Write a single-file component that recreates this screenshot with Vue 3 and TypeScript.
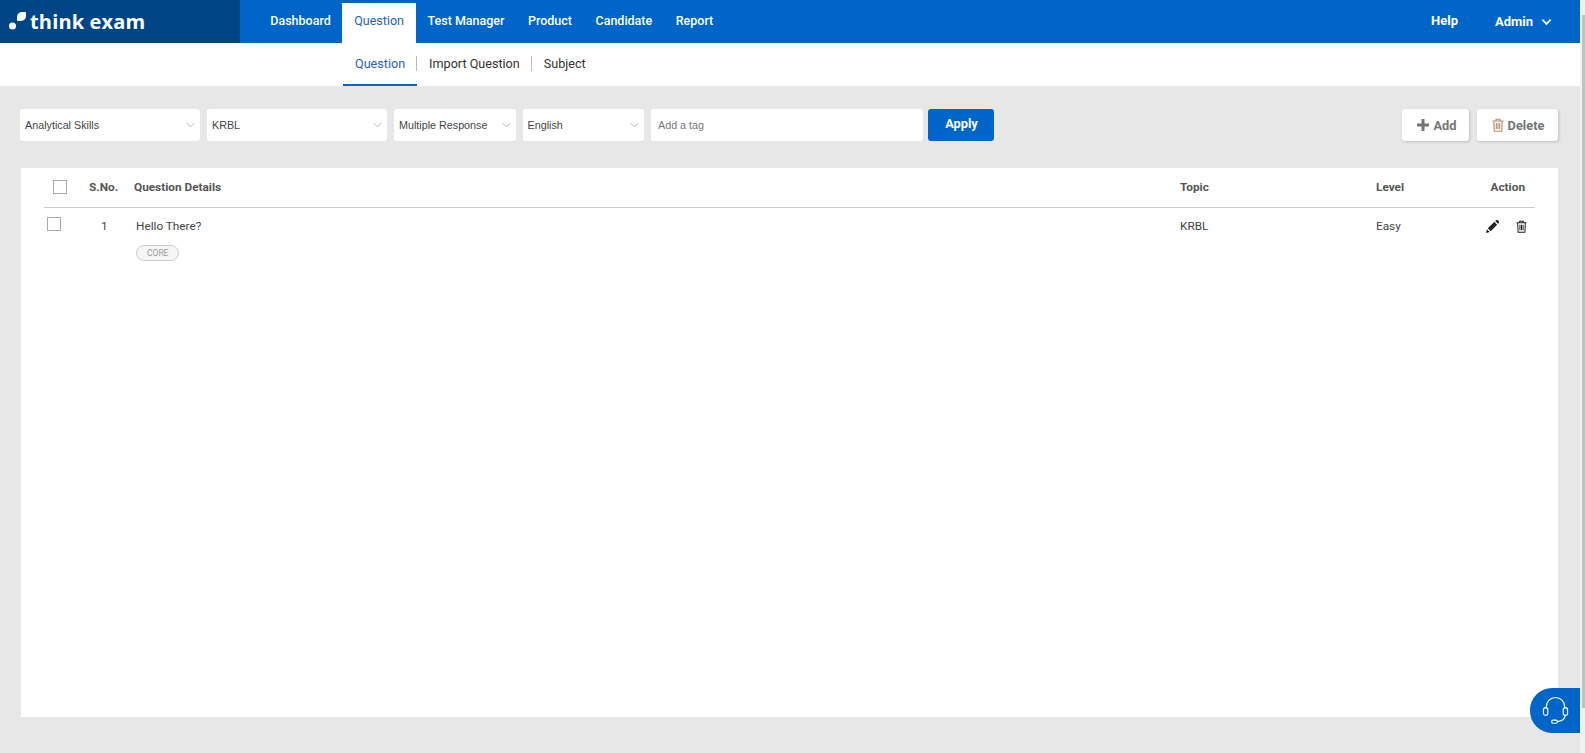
<script setup lang="ts">
const navItems = ['Dashboard', 'Question', 'Test Manager', 'Product', 'Candidate', 'Report']
const subItems = ['Question', 'Import Question', 'Subject']
const filters = [
  { label: 'Analytical Skills', cls: 'w-a' },
  { label: 'KRBL', cls: 'w-a' },
  { label: 'Multiple Response', cls: 'w-b' },
  { label: 'English', cls: 'w-b' },
]
</script>

<template>
  <div class="page">
    <div class="main">
      <header class="topbar">
        <div class="logo">
          <svg class="logo-mark" viewBox="0 0 18 18" width="18" height="18">
            <circle cx="3.5" cy="14" r="3.5" fill="#fff" />
            <path d="M8 5a5 5 0 0 1 5-5h3a1 1 0 0 1 1 1v3a5 5 0 0 1-5 5H9a1 1 0 0 1-1-1z" fill="#fff" />
          </svg>
          <span class="logo-text">think exam</span>
        </div>
        <nav class="nav">
          <a v-for="n in navItems" :key="n" class="nav-item" :class="{ active: n === 'Question' }">{{ n }}</a>
        </nav>
        <div class="nav-right">
          <a class="help">Help</a>
          <a class="admin">Admin
            <svg viewBox="0 0 12 8" width="11" height="8"><path d="M1.500 1.500 6 6l4.500-4.500" fill="none" stroke="#fff" stroke-width="2" /></svg>
          </a>
        </div>
      </header>

      <div class="subbar">
        <a v-for="(s, i) in subItems" :key="s" class="sub-item" :class="{ active: i === 0, last: i === subItems.length - 1 }">
          <span class="sub-label">{{ s }}</span>
        </a>
      </div>

      <section class="filters">
        <div v-for="f in filters" :key="f.label" class="select" :class="f.cls">
          <span>{{ f.label }}</span>
          <svg viewBox="0 0 10 6" width="9" height="6"><path d="M.8.800 5 5 9.200.800" fill="none" stroke="#a8a8a8" stroke-width="1" /></svg>
        </div>
        <div class="tag-input">Add a tag</div>
        <button class="apply">Apply</button>
        <div class="spacer"></div>
        <button class="ghost add">
          <svg viewBox="0 0 12 12" width="12" height="12"><path d="M4.500 0h3v4.500H12v3H7.500V12h-3V7.500H0v-3h4.500z" fill="#757575" /></svg>
          Add
        </button>
        <button class="ghost del">
          <svg viewBox="0 0 12 14" width="12" height="14" fill="none" stroke="#b98a6a" stroke-width="1.100">
            <path d="M.5 3h11M4 3V1.200h4V3M1.800 3l.5 10.300h7.400L10.200 3M4.300 5v6M6 5v6M7.700 5v6" />
          </svg>
          Delete
        </button>
      </section>

      <section class="card">
        <div class="row head">
          <div class="c-check"><span class="box head-box"></span></div>
          <div class="c-sno">S.No.</div>
          <div class="c-detail">Question Details</div>
          <div class="c-topic">Topic</div>
          <div class="c-level">Level</div>
          <div class="c-action">Action</div>
        </div>
        <div class="row body">
          <div class="c-check"><span class="box row-box"></span></div>
          <div class="c-sno num">1</div>
          <div class="c-detail text">
            <div>Hello There?</div>
            <span class="chip">CORE</span>
          </div>
          <div class="c-topic">KRBL</div>
          <div class="c-level">Easy</div>
          <div class="c-action icons">
            <svg viewBox="0 0 14 14" width="13" height="13">
              <path d="M0 14l1-4 3 3zM2 9l7-7 3 3-7 7zM10 1l1-1a1 1 0 0 1 1.400 0l1.600 1.600a1 1 0 0 1 0 1.400l-1 1z" fill="#222" />
            </svg>
            <svg viewBox="0 0 12 14" width="11" height="13" fill="none" stroke="#222" stroke-width="1.100">
              <path d="M.5 3h11M4 3V1.200h4V3M1.800 3l.5 10.300h7.400L10.200 3M4.300 5v6M6 5v6M7.700 5v6" />
            </svg>
          </div>
        </div>
      </section>

      <button class="support" aria-label="Support">
        <svg viewBox="0 0 28 30" width="27" height="29" fill="none" stroke="#fff" stroke-width="1.200">
          <path d="M4.500 13V11a9.500 9.500 0 0 1 19 0v2" />
          <rect x="1.500" y="12" width="4.500" height="8" rx="2.200" />
          <rect x="22" y="12" width="4.500" height="8" rx="2.200" />
          <path d="M24 20c0 4-3 6-8 6.500" />
          <rect x="10" y="25" width="6" height="3.200" rx="1.600" />
        </svg>
      </button>
    </div>
    <div class="scrollbar"><div class="thumb"></div></div>
  </div>
</template>

<style>
html, body { margin: 0; padding: 0; overflow: hidden; background: #e7e7e7; }
</style>

<style scoped>
.page { display: flex; width: 1585px; height: 753px; overflow: hidden; font-family: Roboto, "Liberation Sans", sans-serif; }
.main { position: relative; flex: 1; min-width: 0; background: #e7e7e7; }
.scrollbar { width: 5px; background: #f1f1f1; padding: 15px 0 0 2px; box-sizing: border-box; }
.thumb { height: 693px; background: #c1c1c1; }

.topbar { display: flex; height: 43px; background: #0065c8; color: #fff; }
.logo { width: 240px; background: #004687; display: flex; align-items: center; padding-left: 9px; box-sizing: border-box; gap: 3px; }
.logo-mark { margin-bottom: 2px; }
.logo-text { font-family: "Open Sans", sans-serif; font-weight: 700; font-size: 20px; letter-spacing: .15px; line-height: 1; }
.nav { display: flex; margin-left: 18.5px; }
.nav-item { padding: 0 11.75px; font-size: 12.5px; font-weight: 500; line-height: 41px; }
.nav-item.active { background: #fff; color: #1f5fc4; font-weight: 400; margin-top: 3px; line-height: 35px; height: 40px; }
.nav-right { margin-left: auto; display: flex; font-size: 13px; font-weight: 700; line-height: 41px; padding-right: 28px; }
.help { margin-right: 37px; }
.admin { display: flex; align-items: center; gap: 8px; }

.subbar { display: flex; height: 43px; background: #fff; padding-left: 343px; box-sizing: border-box; }
.sub-item { padding: 0 12px 2px; font-size: 12.6px; color: #333; display: flex; align-items: center; height: 43px; box-sizing: border-box; position: relative; }
.sub-item.active { color: #1f5fc4; border-bottom: 2px solid #0065c8; padding-bottom: 0; }
.sub-label { display: block; line-height: 15px; }
.sub-item:not(.last)::after { content: ""; position: absolute; right: 0; top: 13px; height: 15px; width: 1px; background: #bbb; }

.filters { display: flex; align-items: stretch; height: 32px; margin: 23px 22px 0 20px; gap: 7px; }
.select, .tag-input { background: #fff; border-radius: 3px; display: flex; align-items: center; font-family: "Liberation Sans", Arial, sans-serif; font-size: 10.75px; color: #444; box-sizing: border-box; }
.select { justify-content: space-between; padding: 0 5px 0 5px; }
.w-a { width: 180px; }
.w-b { width: 121.5px; }
.tag-input { width: 272px; padding-left: 7px; color: #777; }
.apply { width: 66px; margin-left: -2px; border: 0; border-radius: 3px; background: #0065c8; color: #fff; font: 700 12.8px Roboto, sans-serif; padding: 0 0 3px 1px; }
.spacer { flex: 1; }
.ghost { background: #fff; border: 0; border-radius: 3px; box-shadow: 1px 1px 3px rgba(0,0,0,.18); color: #757575; font: 700 12.8px Roboto, sans-serif; display: flex; align-items: center; justify-content: center; gap: 4px; padding: 0; }
.add { width: 67px; padding-left: 3px; }
.del { width: 81px; margin-left: 1px; padding-left: 1px; }

.card { margin: 27px 22px 0 21px; height: 549px; background: #fff; padding: 0 23px; box-sizing: border-box; }
.row { display: flex; font-size: 11.8px; color: #444; }
.head { height: 38px; padding-bottom: 1px; align-items: center; font-weight: 700; color: #555; border-bottom: 1px solid #ccc; }
.body { padding-top: 9px; }
.c-check { width: 45px; flex: none; }
.c-sno { width: 45px; flex: none; }
.c-detail { flex: 1; }
.c-topic { width: 196px; flex: none; }
.c-level { width: 106px; flex: none; }
.c-action { width: 53px; flex: none; text-align: right; padding-right: 10px; box-sizing: border-box; white-space: nowrap; }
.box { display: block; width: 14px; height: 14px; border: 1px solid #aaa; box-sizing: border-box; background: #fff; }
.head-box { margin-left: 9px; }
.row-box { margin-left: 3px; }
.num { padding-left: 12px; box-sizing: border-box; line-height: 18px; }
.text { padding-left: 2px; line-height: 18px; }
.body .c-topic, .body .c-level { line-height: 18px; }
.chip { display: inline-block; margin-top: 10px; border: 1px solid #ccc; border-radius: 9px; background: #f6f6f6; color: #999; font-size: 8.5px; line-height: 14px; padding: 0 10px; }
.c-action.icons { display: flex; justify-content: flex-end; gap: 17px; padding: 3px 8px 0 0; }
.support { position: absolute; right: 0; bottom: 20px; width: 50px; height: 45px; border: 0; padding: 0; background: #0065c8; border-radius: 22px 0 0 22px; display: flex; align-items: center; justify-content: center; }
</style>
